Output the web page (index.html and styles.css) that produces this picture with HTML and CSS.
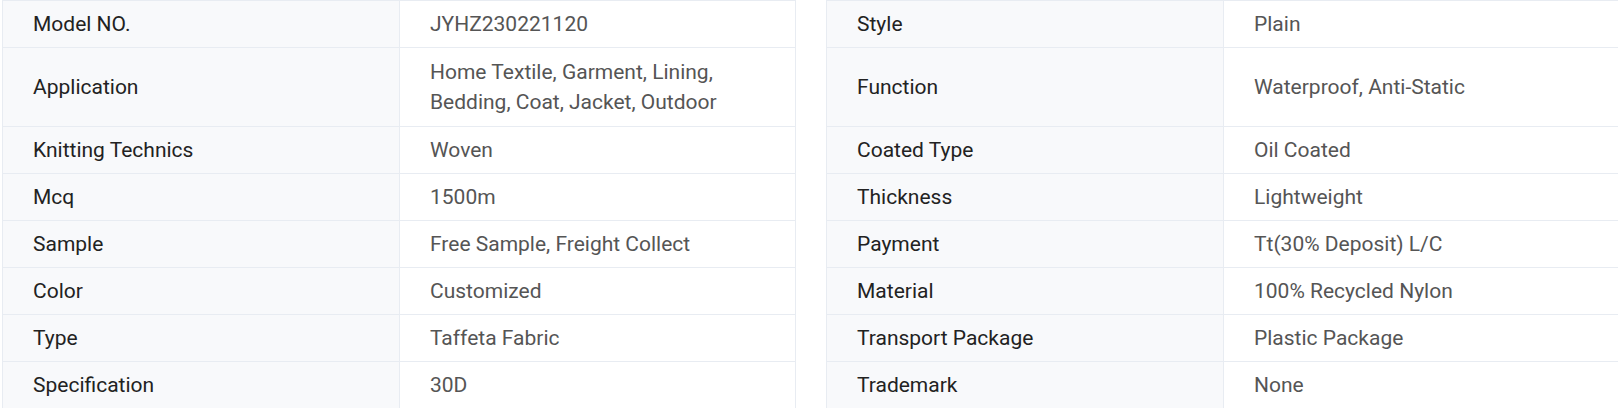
FILE: index.html
```html
<!DOCTYPE html>
<html lang="en">
<head>
<meta charset="utf-8">
<title>Product Specifications</title>
<link rel="stylesheet" href="styles.css">
</head>
<body>
<div class="specs">
  <div class="spec-row">
    <div class="pair"><div class="cell label">Model NO.</div><div class="cell value">JYHZ230221120</div></div>
    <div class="pair"><div class="cell label">Style</div><div class="cell value">Plain</div></div>
  </div>
  <div class="spec-row tall">
    <div class="pair"><div class="cell label">Application</div><div class="cell value">Home Textile, Garment, Lining, Bedding, Coat, Jacket, Outdoor</div></div>
    <div class="pair"><div class="cell label">Function</div><div class="cell value">Waterproof, Anti-Static</div></div>
  </div>
  <div class="spec-row">
    <div class="pair"><div class="cell label">Knitting Technics</div><div class="cell value">Woven</div></div>
    <div class="pair"><div class="cell label">Coated Type</div><div class="cell value">Oil Coated</div></div>
  </div>
  <div class="spec-row">
    <div class="pair"><div class="cell label">Mcq</div><div class="cell value">1500m</div></div>
    <div class="pair"><div class="cell label">Thickness</div><div class="cell value">Lightweight</div></div>
  </div>
  <div class="spec-row">
    <div class="pair"><div class="cell label">Sample</div><div class="cell value">Free Sample, Freight Collect</div></div>
    <div class="pair"><div class="cell label">Payment</div><div class="cell value">Tt(30% Deposit) L/C</div></div>
  </div>
  <div class="spec-row">
    <div class="pair"><div class="cell label">Color</div><div class="cell value">Customized</div></div>
    <div class="pair"><div class="cell label">Material</div><div class="cell value">100% Recycled Nylon</div></div>
  </div>
  <div class="spec-row">
    <div class="pair"><div class="cell label">Type</div><div class="cell value">Taffeta Fabric</div></div>
    <div class="pair"><div class="cell label">Transport Package</div><div class="cell value">Plastic Package</div></div>
  </div>
  <div class="spec-row">
    <div class="pair"><div class="cell label">Specification</div><div class="cell value">30D</div></div>
    <div class="pair"><div class="cell label">Trademark</div><div class="cell value">None</div></div>
  </div>
</div>
</body>
</html>
```
FILE: styles.css
```css
* { box-sizing: border-box; }
html, body {
  margin: 0;
  padding: 0;
  background: #ffffff;
  overflow: hidden;
}
body {
  font-family: Roboto, "Liberation Sans", Arial, sans-serif;
  font-size: 21px;
  line-height: 30px;
}
.specs {
  padding-left: 2px;
  width: 1622px;
}
.spec-row {
  display: grid;
  grid-template-columns: 794px 794px;
  column-gap: 30px;
  min-height: 47px;
}
.spec-row.tall {
  min-height: 79px;
}
.pair {
  display: grid;
  grid-template-columns: 397px 396px;
  border-left: 1px solid #e8ecf2;
}
.spec-row:first-child .pair {
  border-top: 1px solid #e8ecf2;
}
.cell {
  padding: 8px 30px;
  border-right: 1px solid #e8ecf2;
  border-bottom: 1px solid #e8ecf2;
  display: flex;
  align-items: center;
}
.label {
  background: #f8f9fb;
  color: #222222;
}
.value {
  background: #ffffff;
  color: #555555;
}
```
